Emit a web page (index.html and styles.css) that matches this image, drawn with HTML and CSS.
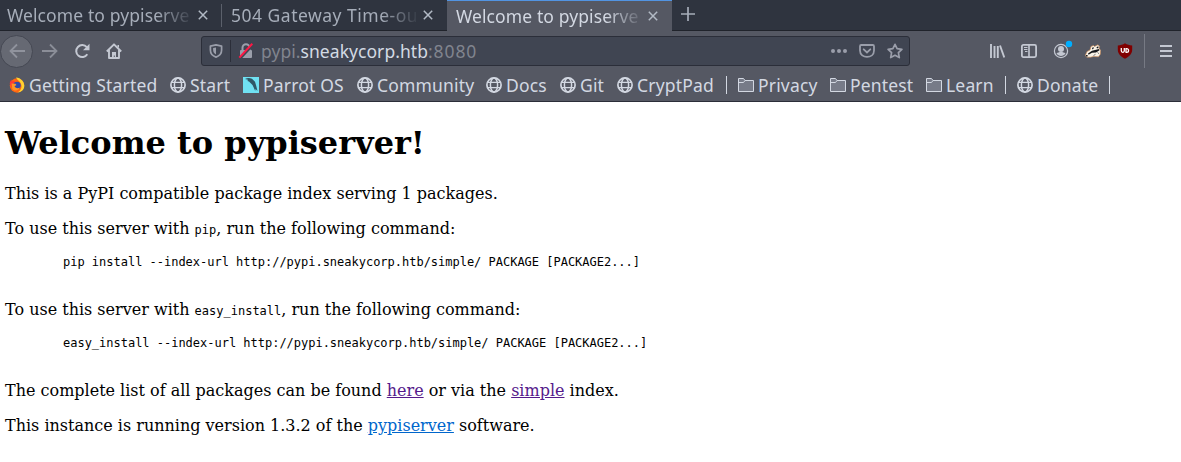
FILE: index.html
```html
<!DOCTYPE html>
<html lang="en">
<head>
<meta charset="utf-8">
<title>Welcome to pypiserver!</title>
<link rel="stylesheet" href="styles.css">
</head>
<body>
<svg class="defs" width="0" height="0">
  <defs>
    <symbol id="globe" viewBox="0 0 16 16"><g fill="none" stroke="currentColor" stroke-width="1.5"><circle cx="8" cy="8" r="7.1" stroke-width="1.7"/><ellipse cx="8" cy="8" rx="3.6" ry="7"/><path d="M1.8 5.3h12.4M1.8 10.7h12.4" stroke-width="1.3"/></g></symbol>
    <symbol id="folder" viewBox="0 0 16 16"><path d="M.5 14.500v-13h5l1.500 2h8.500v11z" fill="#777b88" stroke="currentColor"/><path d="M.5 5.500h5L7 3.500" fill="none" stroke="currentColor"/></symbol>
    <symbol id="close" viewBox="0 0 10 10"><path d="M.8.8l8.4 8.4M9.2.8L.8 9.2" fill="none" stroke="currentColor" stroke-width="1.5"/></symbol>
  </defs>
</svg>
<header class="browser">
  <div class="tabs">
    <div class="tab tab-first"><span class="tab-title">Welcome to pypiserve</span><svg class="close"><use href="#close"/></svg></div>
    <div class="tab"><span class="tab-title tab-title-gateway">504 Gateway Time-ou</span><svg class="close"><use href="#close"/></svg></div>
    <div class="tab tab-active"><span class="tab-title">Welcome to pypiserve</span><svg class="close"><use href="#close"/></svg></div>
    <svg class="new-tab" viewBox="0 0 14 14"><path d="M7 0v14M0 7h14" stroke="currentColor" stroke-width="1.7"/></svg>
  </div>
  <div class="toolbar">
    <div class="nav">
      <span class="back"><svg class="icon" viewBox="0 0 16 16"><path d="M16 8H1.5M8 1.5L1.5 8 8 14.5" fill="none" stroke="currentColor" stroke-width="1.8"/></svg></span>
      <svg class="icon forward" viewBox="0 0 16 16"><path d="M0 8h14.5M8 1.5L14.500 8 8 14.500" fill="none" stroke="currentColor" stroke-width="1.8"/></svg>
      <svg class="icon reload" viewBox="0 0 16 16"><path d="M13.300 11.300A6 6 0 1 1 12.800 4.200" fill="none" stroke="currentColor" stroke-width="2"/><path d="M15.500.800v6.400H9z" fill="currentColor"/></svg>
      <svg class="icon home" viewBox="0 0 16 16"><path d="M.8 8.500L8 1.300l7.200 7.200M3 7v8h10V7" fill="none" stroke="currentColor" stroke-width="1.900" stroke-linejoin="round"/><path d="M6 15V9h4v6H8.800v-2.500H7.800V15z" fill="currentColor"/><path d="M11.500 2h1.500v3l-1.500-1.500z" fill="currentColor"/></svg>
    </div>
    <div class="urlbar">
      <svg class="shield" viewBox="0 0 14 14"><path d="M7 .9L12.600 2.100v4c0 3.500-2 5.900-5.600 7-3.600-1.100-5.600-3.500-5.600-7v-4z" fill="none" stroke="currentColor" stroke-width="1.700" stroke-linejoin="round"/><path d="M7 3.500v6.900C4.900 9.400 4.100 8 4.100 6.100V4z" fill="currentColor"/></svg>
      <span class="url-divider"></span>
      <svg class="lock" viewBox="0 0 16 16"><path d="M4.500 8V4.800a3.500 3.500 0 0 1 7 0V8" fill="none" stroke="currentColor" stroke-width="2"/><rect x="2" y="7" width="12" height="8" rx="1" fill="currentColor"/><path d="M2.300 15.700L15.400 1.600" stroke="#404552" stroke-width="2"/><path d="M1.300 14.600L14.300.800" stroke="#ff1744" stroke-width="2"/></svg>
      <span class="url">pypi.<b>sneakycorp.htb</b><span class="port">:8080</span></span>
      <svg class="dots" viewBox="0 0 16 16"><g fill="currentColor"><circle cx="2" cy="8" r="2"/><circle cx="8" cy="8" r="2"/><circle cx="14" cy="8" r="2"/></g></svg>
      <svg class="icon pocket" viewBox="0 0 16 16"><path d="M2.200 2h11.600c.8 0 1.200.4 1.200 1.200V7.500c0 8.600-14 8.600-14 0V3.200C1 2.400 1.400 2 2.200 2z" fill="none" stroke="currentColor" stroke-width="1.800"/><path d="M4.700 6.300L8 9.500l3.300-3.200" fill="none" stroke="currentColor" stroke-width="1.800" stroke-linecap="round"/></svg>
      <svg class="icon star" viewBox="0 0 16 16"><path d="M8 1.300l2.100 4.300 4.800.7-3.500 3.400.9 4.900L8 12.300l-4.300 2.300.9-4.900L1.100 6.300l4.800-.7z" fill="none" stroke="currentColor" stroke-width="1.700" stroke-linejoin="round"/></svg>
    </div>
    <div class="tools">
      <svg class="icon" viewBox="0 0 16 16"><path d="M2 1v14M5.500 3v12M8.800 3v12" stroke="currentColor" stroke-width="1.900"/><path d="M11 2.500l4.300 12" stroke="currentColor" stroke-width="1.900"/></svg>
      <svg class="icon" viewBox="0 0 16 16"><rect x=".9" y="1.900" width="14.200" height="12.200" rx="1.500" fill="none" stroke="currentColor" stroke-width="1.800"/><path d="M8 2v12" stroke="currentColor" stroke-width="1.600"/><path d="M3 4.500h3.500M3 6.500h3.500M4 8.500h2.500" stroke="currentColor"/></svg>
      <svg class="account" viewBox="0 0 20 20"><circle cx="8" cy="12" r="6.600" fill="none" stroke="currentColor" stroke-width="1.200"/><circle cx="8" cy="10" r="3" fill="currentColor"/><path d="M3.500 14.500c2-2 7-2 9 0-2 3.300-7 3.300-9 0z" fill="currentColor"/><circle cx="16" cy="5" r="3.200" fill="#00aeff"/></svg>
      <svg class="icon" viewBox="0 0 16 16"><path d="M.3 12.500L2 8.500 5 7l1-3.500 2.500-1 1 1L13 1.800l1.500 1.500-.5 2 1.600 2-.3 4-1.800 2.500-5-.3-3 .7H1.800z" fill="#f8f2e7" stroke="#d08a50" stroke-width=".6"/><path d="M3 10.500L7 7.800l5-1.200 2-.6.5 1.200L11 9.500l-4 .3-3.500 2zM7 5.500l1-1.500 1 1-1.500 1.500zM11.500 4.200l1.800-1 .2 1.500-1.500.8z" fill="#15171b"/><path d="M.8 12h1.800v1.400H1z" fill="#222"/><path d="M8.500 12.500l2-1.200M12.500 9.500l1.500 1.200" fill="none" stroke="#777"/></svg>
      <svg class="icon" viewBox="0 0 16 16"><path d="M8 .2c2 1.400 4.500 2.100 7.200 2.200v4.400c0 4-3 7-7.200 8.900-4.200-1.900-7.200-4.900-7.200-8.900V2.400C3.500 2.300 6 1.600 8 .2z" fill="#800000"/><path d="M4.300 5v2.800a1.500 1.500 0 0 0 3 0V5M9 5.500v3.800M8.500 9.300h1.200a1.800 1.800 0 0 0 0-3.700H8.500" fill="none" stroke="#fff" stroke-width="1.300"/></svg>
    </div>
    <span class="menu-divider"></span>
    <svg class="menu" viewBox="0 0 12 12"><path d="M0 1h12M0 6h12M0 11h12" stroke="currentColor" stroke-width="2"/></svg>
  </div>
  <nav class="bookmarks">
    <a class="bm bm-firefox"><svg viewBox="0 0 16 16"><circle cx="8" cy="8.500" r="7.200" fill="#ff6511"/><path d="M7 .5c5 .4 8 4 8.300 8 .2 4-3 7-7 7 4-2 5.500-6 3-10C10 3.500 8 3 7 .5z" fill="#ffd231"/><path d="M.8 7c0-2 .8-3.500 1.700-4.500v2L5 4l4 3-1 5H4z" fill="#ff3b36"/><circle cx="8" cy="8.500" r="3.700" fill="#314cab"/><path d="M2.500 6.500l4 .3 1 1.300-2 1.200c1 2 3.500 2.500 5.300 1.200-1 3.500-5.300 4-7.500 1.500z" fill="#ff9726"/></svg><span>Getting Started</span></a>
    <a class="bm bm-start"><svg><use href="#globe"/></svg><span>Start</span></a>
    <a class="bm bm-parrot"><svg viewBox="0 0 16 16"><path fill="#70e1f2" d="M0 0h16v16H0z"/><path d="M2 2C4 .6 7 .6 9 1.800l3 3 1.200 4L14.500 14l-2-2-.3 2-1.500-3.500L9.500 8 6 4.500 4.500 4 5 2.800z" fill="#2f5867"/></svg><span>Parrot OS</span></a>
    <a class="bm bm-community"><svg><use href="#globe"/></svg><span>Community</span></a>
    <a class="bm bm-docs"><svg><use href="#globe"/></svg><span>Docs</span></a>
    <a class="bm bm-git"><svg><use href="#globe"/></svg><span>Git</span></a>
    <a class="bm bm-cryptpad"><svg><use href="#globe"/></svg><span>CryptPad</span></a>
    <i class="bm-separator"></i>
    <a class="bm bm-privacy"><svg><use href="#folder"/></svg><span>Privacy</span></a>
    <a class="bm bm-pentest"><svg><use href="#folder"/></svg><span>Pentest</span></a>
    <a class="bm bm-learn"><svg><use href="#folder"/></svg><span>Learn</span></a>
    <i class="bm-separator"></i>
    <a class="bm bm-donate"><svg><use href="#globe"/></svg><span>Donate</span></a>
    <i class="bm-separator"></i>
  </nav>
</header>
<main class="page">
  <h1>Welcome to pypiserver!</h1>
  <p>This is a PyPI compatible package index serving 1 packages.</p>
  <p>To use this server with <code>pip</code>, run the following command:</p>
  <pre>pip install --index-url http://pypi.sneakycorp.htb/simple/ PACKAGE [PACKAGE2...]</pre>
  <p>To use this server with <code>easy_install</code>, run the following command:</p>
  <pre>easy_install --index-url http://pypi.sneakycorp.htb/simple/ PACKAGE [PACKAGE2...]</pre>
  <p>The complete list of all packages can be found <a class="visited" href="#packages">here</a> or via the <a class="visited" href="#simple">simple</a> index.</p>
  <p>This instance is running version 1.3.2 of the <a class="link" href="#project">pypiserver</a> software.</p>
</main>
</body>
</html>
```

FILE: styles.css
```css
* { box-sizing: border-box; }
body { margin: 0; background: #fff; overflow: hidden; }
svg { display: block; flex: none; }
.defs { position: absolute; }
.browser { height: 102px; background: #555863; border-bottom: 1px solid #2b2e39; color: #d3d8e2; font-family: "Noto Sans", sans-serif; font-size: 17.5px; }
.tabs { display: flex; height: 31px; background: #2f343f; border-bottom: 1px solid #20232b; }
.tab { display: flex; align-items: center; width: 225px; height: 30px; padding: 0 14px 0 9px; color: #a6adb9; background: linear-gradient(#5b606b, #5b606b) right 4px / 1px 23px no-repeat; }
.tab-first { width: 222px; padding-left: 7px; }
.tab:nth-child(2) { background: none; }
.tab-title { width: 187px; margin-right: 5px; white-space: nowrap; line-height: 30px; letter-spacing: .1px; -webkit-mask-image: linear-gradient(to right, #000 80%, transparent 101%); mask-image: linear-gradient(to right, #000 80%, transparent 101%); }
.tab-title-gateway { letter-spacing: .5px; }
.close { width: 10px; height: 10px; color: #b2bac5; }
.tab-active { height: 31px; padding-bottom: 1px; background: #555863; border-top: 1px solid #5294e2; color: #d3d8e2; }
.new-tab { width: 14px; height: 14px; margin: 7px 0 0 9px; color: #a6adb9; }
.toolbar { display: flex; align-items: center; height: 40px; color: #c4c8d2; }
.icon { width: 16px; height: 16px; }
.nav { display: flex; align-items: center; width: 201px; }
.back { display: grid; place-items: center; width: 33px; height: 33px; border: 1px solid #454853; border-radius: 50%; background: #666973; color: #90939d; }
.forward { margin-left: 9px; color: #8b8e98; }
.reload { margin-left: 16px; }
.home { margin-left: 16px; }
.urlbar { display: flex; align-items: center; width: 709px; height: 30px; padding-left: 7px; background: #404552; border: 1px solid #2b2e39; border-radius: 3px; color: #9a9eaa; }
.shield { width: 14px; height: 14px; }
.url-divider { width: 1px; height: 22px; margin: 0 7px; background: #2b2e39; }
.lock { width: 16px; height: 16px; }
.url { width: 570px; margin-left: 7px; color: #80848e; line-height: 28px; letter-spacing: .05px; }
.url b { color: #d3dae3; font-weight: 400; }
.port { letter-spacing: .9px; }
.dots { width: 16px; height: 16px; }
.pocket { margin-left: 12px; }
.star { margin-left: 12px; }
.tools { display: flex; align-items: center; gap: 16px; margin-left: 79px; }
.account { width: 20px; height: 20px; margin: -4px -4px 0 0; }
.menu-divider { width: 1px; height: 34px; margin-left: 11px; background: #777a84; }
.menu { width: 12px; height: 12px; margin-left: 15px; }
.bookmarks { display: flex; align-items: center; height: 28px; padding-left: 9px; }
.bm { display: flex; align-items: center; gap: 4px; flex: none; white-space: nowrap; letter-spacing: .17px; }
.bm svg { width: 16px; height: 16px; }
.bm-firefox { width: 161px; }
.bm-start { width: 73px; }
.bm-parrot { width: 114px; }
.bm-community { width: 129px; }
.bm-docs { width: 74px; }
.bm-git { width: 57px; }
.bm-cryptpad { width: 109px; }
.bm-separator { flex: none; width: 1px; height: 18px; margin-right: 11px; background: #d3d8e2; }
.bm-privacy { width: 92px; }
.bm-pentest { width: 96px; }
.bm-learn { width: 79px; }
.bm-donate { width: 92px; }
.page { padding: 22px 5px 0; color: #000; font: 16px/19px "DejaVu Serif", serif; }
.page h1 { margin: 0 0 22px; font-size: 32px; line-height: 38px; }
.page p { margin: 0 0 16px; }
.page code, .page pre { font-family: "DejaVu Sans Mono", monospace; font-size: 12px; line-height: 14px; }
.page pre { margin: 17px 0 31px 58px; letter-spacing: -.012px; }
.visited { color: #551a8b; }
.link { color: #0066cc; }
```
